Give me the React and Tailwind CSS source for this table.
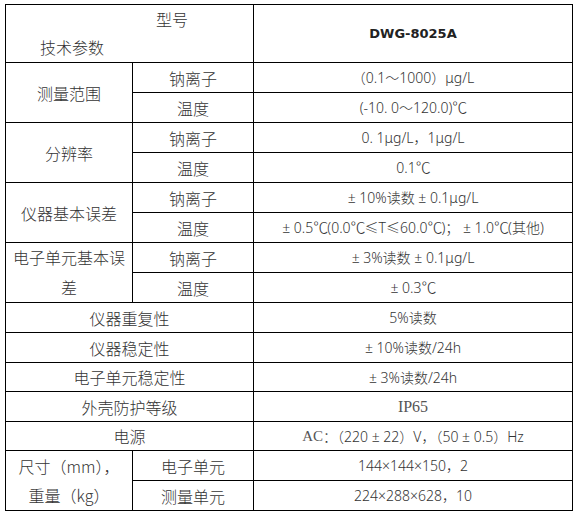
import React from "react";

// 行高：表头 57，其余 29（第 11、13 行 28）
const rows = "grid-rows-[57px_29px_29px_29px_29px_29px_29px_29px_29px_29px_29px_28px_29px_28px_29px_29px]";

const Label = ({ className = "", children }) => (
  <div className={`bg-white flex items-center justify-center text-center text-[16px] font-light text-[#333] ${className}`}>
    {children}
  </div>
);

const Value = ({ className = "", children }) => (
  <div
    className={`bg-white flex items-center justify-center text-center text-[14px] font-light text-[#333] whitespace-nowrap ${className}`}
    style={{ fontFamily: '"Noto Sans", "Noto Sans CJK SC", sans-serif' }}
  >
    {children}
  </div>
);

// 全角的摄氏度符号
const C = () => (
  <span
    className="inline-block w-[14px] text-center text-[15px]"
    style={{ fontFamily: '"Noto Sans CJK SC", sans-serif', fontFeatureSettings: '"fwid"' }}
  >
    ℃
  </span>
);

const App = () => {
  return (
    <div
      className="min-h-screen bg-white pt-[4px] pl-[5px]"
      style={{ fontFamily: '"Noto Sans CJK SC", "Noto Sans", sans-serif' }}
    >
      <div className={`grid grid-cols-[126px_120px_318px] ${rows} gap-px p-px bg-black w-fit`}>
        {/* 表头 */}
        <div className="col-span-2 bg-white flex flex-col text-[16px] font-light text-[#333] leading-[28px]">
          <span className="pl-[150px]">型号</span>
          <span className="pl-[34px]">技术参数</span>
        </div>
        <div className="bg-white flex items-center justify-center">
          <span className="text-[13px] font-bold text-[#222]" style={{ fontFamily: '"DejaVu Sans", sans-serif' }}>
            DWG-8025A
          </span>
        </div>

        {/* 测量范围 */}
        <Label className="row-span-2">测量范围</Label>
        <Label>钠离子</Label>
        <Value>（0.1～1000）μg/L</Value>
        <Label>温度</Label>
        <Value>(-10. 0～120.0)<C /></Value>

        {/* 分辨率 */}
        <Label className="row-span-2">分辨率</Label>
        <Label>钠离子</Label>
        <Value>0. 1μg/L，1μg/L</Value>
        <Label>温度</Label>
        <Value>0.1<C /></Value>

        {/* 仪器基本误差 */}
        <Label className="row-span-2">仪器基本误差</Label>
        <Label>钠离子</Label>
        <Value>± 10%读数 ± 0.1μg/L</Value>
        <Label>温度</Label>
        <Value>± 0.5<C />(0.0<C />≤T≤60.0<C />)； ± 1.0<C />(其他)</Value>

        {/* 电子单元基本误差 */}
        <Label className="row-span-2 leading-[29.5px]">
          电子单元基本误
          <br />
          差
        </Label>
        <Label>钠离子</Label>
        <Value>± 3%读数 ± 0.1μg/L</Value>
        <Label>温度</Label>
        <Value>± 0.3<C /></Value>

        <Label className="col-span-2">仪器重复性</Label>
        <Value>5%读数</Value>

        <Label className="col-span-2">仪器稳定性</Label>
        <Value>± 10%读数/24h</Value>

        <Label className="col-span-2">电子单元稳定性</Label>
        <Value>± 3%读数/24h</Value>

        <Label className="col-span-2">外壳防护等级</Label>
        <Value>
          <span className="text-[16px] font-normal text-[#555]" style={{ fontFamily: '"Liberation Serif", serif' }}>IP65</span>
        </Value>

        <Label className="col-span-2">电源</Label>
        <Value>
          <span className="text-[15px] font-normal text-[#555]" style={{ fontFamily: '"Liberation Serif", serif' }}>AC</span>
          ：（220 ± 22）V，（50 ± 0.5）Hz
        </Value>

        {/* 尺寸 / 重量 */}
        <Label className="row-span-2 leading-[29px]">
          尺寸（mm），
          <br />
          重量（kg）
        </Label>
        <Label>电子单元</Label>
        <Value>144×144×150，2</Value>
        <Label>测量单元</Label>
        <Value>224×288×628，10</Value>
      </div>
    </div>
  );
};

export default App;
